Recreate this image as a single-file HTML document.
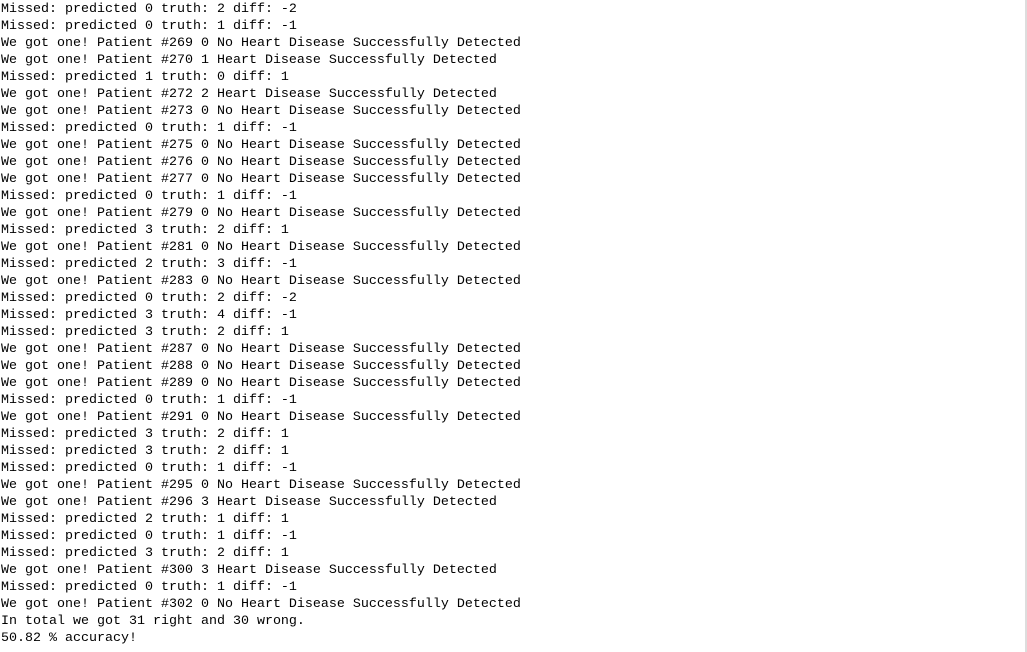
<!DOCTYPE html>
<html><head><style>
html,body{margin:0;padding:0;background:#fff;width:1027px;height:652px;overflow:hidden}
pre{margin:0;position:absolute;top:1px;left:1px;font-family:"Liberation Mono",monospace;font-size:13.33px;line-height:17px;color:#000}
.b{position:absolute;right:0;top:0;width:2px;height:652px;background:#ddd}
</style></head><body><pre>Missed: predicted 0 truth: 2 diff: -2
Missed: predicted 0 truth: 1 diff: -1
We got one! Patient #269 0 No Heart Disease Successfully Detected
We got one! Patient #270 1 Heart Disease Successfully Detected
Missed: predicted 1 truth: 0 diff: 1
We got one! Patient #272 2 Heart Disease Successfully Detected
We got one! Patient #273 0 No Heart Disease Successfully Detected
Missed: predicted 0 truth: 1 diff: -1
We got one! Patient #275 0 No Heart Disease Successfully Detected
We got one! Patient #276 0 No Heart Disease Successfully Detected
We got one! Patient #277 0 No Heart Disease Successfully Detected
Missed: predicted 0 truth: 1 diff: -1
We got one! Patient #279 0 No Heart Disease Successfully Detected
Missed: predicted 3 truth: 2 diff: 1
We got one! Patient #281 0 No Heart Disease Successfully Detected
Missed: predicted 2 truth: 3 diff: -1
We got one! Patient #283 0 No Heart Disease Successfully Detected
Missed: predicted 0 truth: 2 diff: -2
Missed: predicted 3 truth: 4 diff: -1
Missed: predicted 3 truth: 2 diff: 1
We got one! Patient #287 0 No Heart Disease Successfully Detected
We got one! Patient #288 0 No Heart Disease Successfully Detected
We got one! Patient #289 0 No Heart Disease Successfully Detected
Missed: predicted 0 truth: 1 diff: -1
We got one! Patient #291 0 No Heart Disease Successfully Detected
Missed: predicted 3 truth: 2 diff: 1
Missed: predicted 3 truth: 2 diff: 1
Missed: predicted 0 truth: 1 diff: -1
We got one! Patient #295 0 No Heart Disease Successfully Detected
We got one! Patient #296 3 Heart Disease Successfully Detected
Missed: predicted 2 truth: 1 diff: 1
Missed: predicted 0 truth: 1 diff: -1
Missed: predicted 3 truth: 2 diff: 1
We got one! Patient #300 3 Heart Disease Successfully Detected
Missed: predicted 0 truth: 1 diff: -1
We got one! Patient #302 0 No Heart Disease Successfully Detected
In total we got 31 right and 30 wrong.
50.82 % accuracy!</pre><div class="b"></div></body></html>
